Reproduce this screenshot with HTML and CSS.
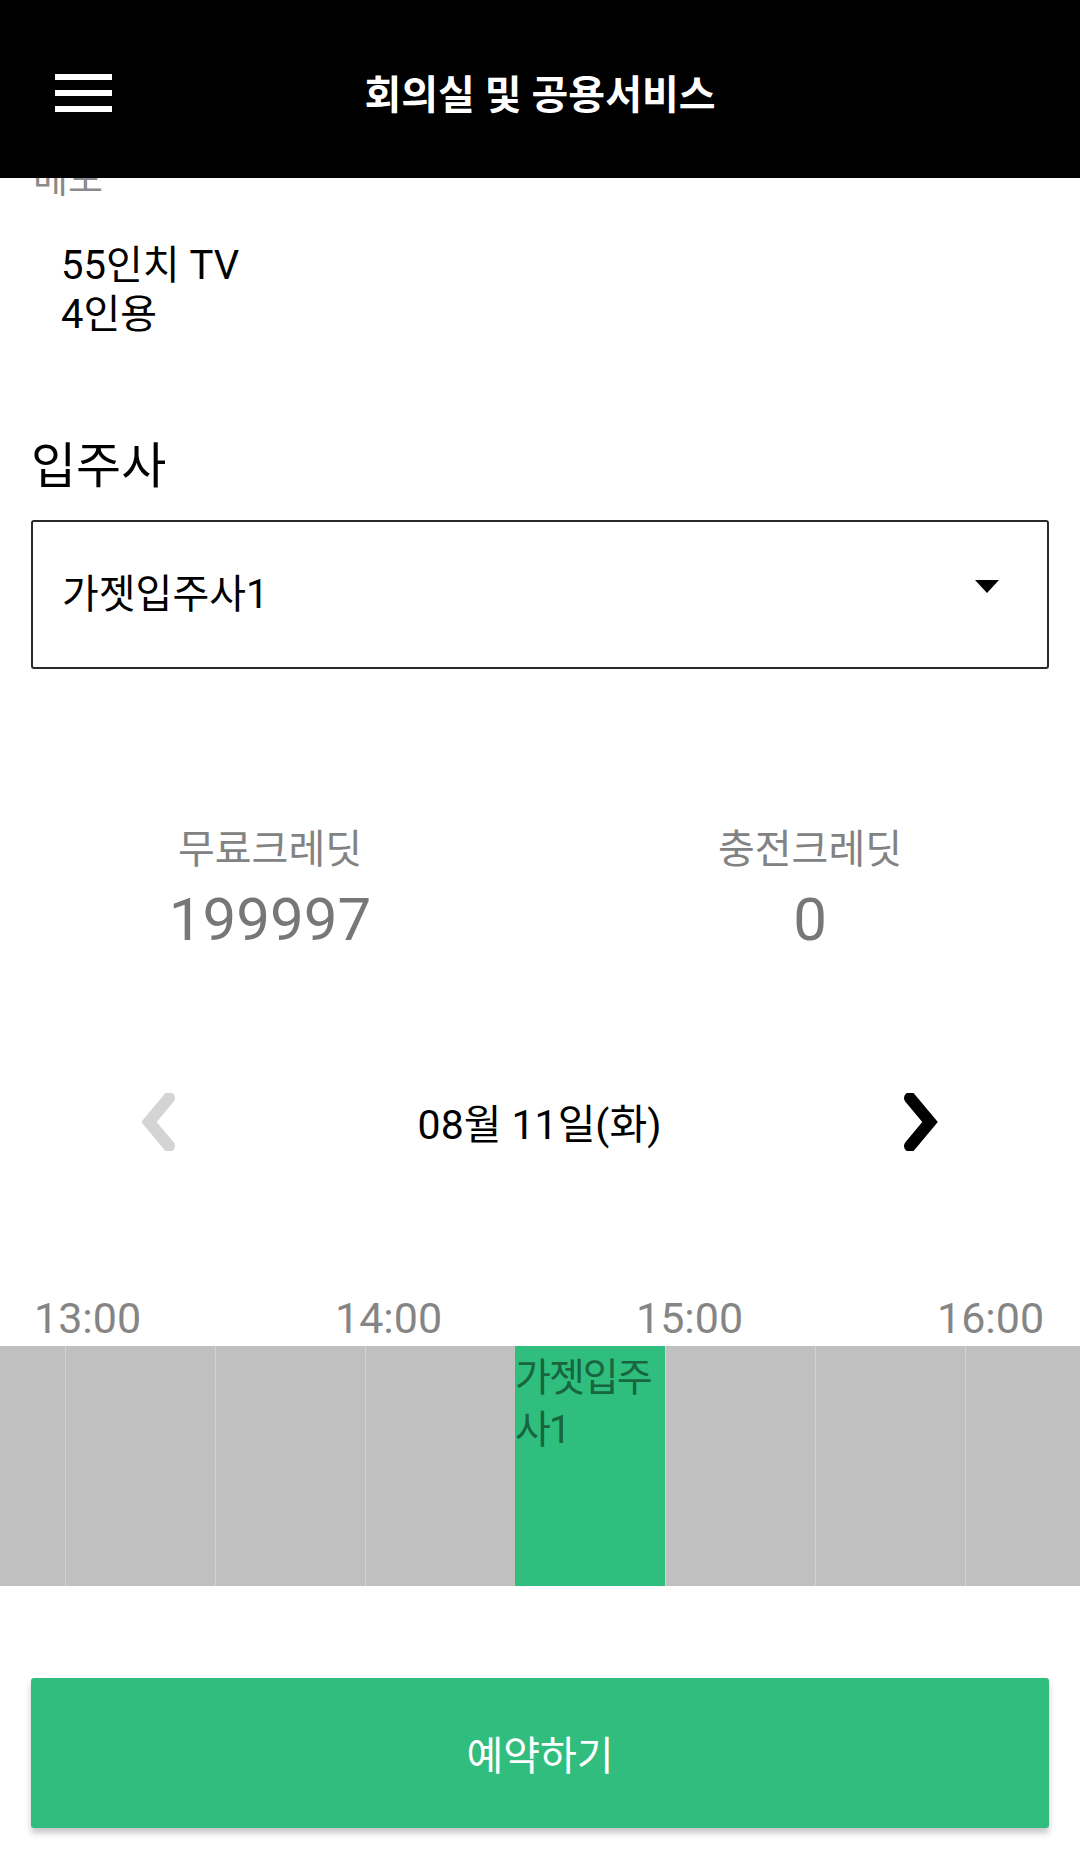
FILE: index.html
```html
<!DOCTYPE html>
<html lang="ko">
<head>
    <meta charset="UTF-8">
    <meta name="viewport" content="width=device-width, initial-scale=1.0">
    <title>회의실 및 공용서비스</title>
    <link rel="stylesheet" href="styles.css">
</head>
<body>
    <header class="topbar">
        <div class="menu-btn">
            <span></span>
            <span></span>
            <span></span>
        </div>
        <h1 class="topbar-title">회의실 및 공용서비스</h1>
    </header>

    <main class="content">
        <div class="memo-label">메모</div>
        <div class="memo-text">55인치 TV<br>4인용</div>

        <h2 class="section-title">입주사</h2>
        <div class="select-box">
            <span class="select-value">가젯입주사1</span>
            <span class="select-arrow"></span>
        </div>

        <div class="credits">
            <div class="credit">
                <div class="credit-label">무료크레딧</div>
                <div class="credit-value">199997</div>
            </div>
            <div class="credit">
                <div class="credit-label">충전크레딧</div>
                <div class="credit-value">0</div>
            </div>
        </div>

        <div class="date-nav">
            <svg class="chevron prev" viewBox="0 0 36 58" width="36" height="58">
                <path d="M29 5 L9 29 L29 53"/>
            </svg>
            <div class="date-text">08월 11일(화)</div>
            <svg class="chevron next" viewBox="0 0 36 58" width="36" height="58">
                <path d="M7 5 L27 29 L7 53"/>
            </svg>
        </div>

        <div class="time-labels">
            <span>13:00</span>
            <span>14:00</span>
            <span>15:00</span>
            <span>16:00</span>
        </div>
        <div class="timeline">
            <div class="slot edge"></div>
            <div class="slot"></div>
            <div class="slot"></div>
            <div class="slot"></div>
            <div class="slot booked">가젯입주사1</div>
            <div class="slot"></div>
            <div class="slot"></div>
            <div class="slot edge-right"></div>
        </div>

        <button class="reserve-btn">예약하기</button>
    </main>
</body>
</html>
```

FILE: styles.css
```css
body, html {
    margin: 0;
    padding: 0;
    height: 100%;
    background-color: #fff;
    font-family: Roboto, "Noto Sans CJK KR", sans-serif;
    overflow: hidden;
}
.topbar {
    display: grid;
    grid-template-columns: 1fr auto 1fr;
    align-items: start;
    height: 178px;
    background-color: #000;
    color: #fff;
}
.menu-btn {
    display: flex;
    flex-direction: column;
    gap: 10px;
    width: 57px;
    margin: 74px 0 0 55px;
}
.menu-btn span {
    display: block;
    height: 6px;
    background-color: #fff;
}
.topbar-title {
    margin: 72px 0 0;
    font-size: 40px;
    line-height: 48px;
    font-weight: 700;
}
.content {
    overflow: hidden;
    height: 1680px;
}
.memo-label {
    margin-top: -23px;
    padding-left: 33px;
    font-size: 38px;
    line-height: 48px;
    color: #8a8a8a;
}
.memo-text {
    margin-top: 38px;
    padding-left: 61px;
    font-size: 40px;
    line-height: 49px;
    color: #000;
}
.section-title {
    margin: 100px 0 0;
    padding-left: 31px;
    font-size: 49px;
    line-height: 56px;
    font-weight: 400;
    color: #000;
}
.select-box {
    display: flex;
    align-items: center;
    justify-content: space-between;
    box-sizing: border-box;
    height: 149px;
    margin: 25px 31px 0;
    padding: 0 48px 0 29px;
    border: 2px solid #2a2a2a;
    border-radius: 3px;
}
.select-value {
    font-size: 40px;
    line-height: 48px;
    color: #000;
}
.select-arrow {
    width: 0;
    height: 0;
    margin-bottom: 16px;
    border-left: 12px solid transparent;
    border-right: 12px solid transparent;
    border-top: 13px solid #000;
}
.credits {
    display: flex;
    margin-top: 157px;
}
.credit {
    flex: 1;
    text-align: center;
}
.credit-label {
    font-size: 40px;
    line-height: 48px;
    color: #828282;
}
.credit-value {
    margin-top: 11px;
    font-size: 60px;
    line-height: 70px;
    color: #777;
}
.date-nav {
    display: flex;
    align-items: flex-start;
    justify-content: space-between;
    height: 60px;
    margin-top: 137px;
    padding: 0 141px 0 140px;
}
.chevron {
    display: block;
    margin-top: 1px;
}
.chevron path {
    fill: none;
    stroke-width: 12;
    stroke-linejoin: miter;
    stroke-linecap: round;
}
.chevron.prev path {
    stroke: #d4d4d4;
}
.chevron.next path {
    stroke: #000;
}
.date-text {
    margin-top: 8px;
    font-size: 41px;
    line-height: 50px;
    color: #000;
}
.time-labels {
    display: flex;
    margin-top: 141px;
    padding-left: 34px;
    font-size: 43px;
    line-height: 50px;
    color: #858585;
}
.time-labels span {
    flex-shrink: 0;
    width: 301px;
}
.timeline {
    display: flex;
    height: 240px;
    margin-top: 3px;
    background-color: #c0c0c0;
}
.slot {
    box-sizing: border-box;
    width: 150px;
    flex-shrink: 0;
    border-left: 1px solid #d2d2d2;
}
.slot.edge {
    width: 65px;
    border-left: none;
}
.slot.edge-right {
    width: 115px;
}
.slot.booked {
    padding-top: 6px;
    border-left: none;
    background-color: #2fbe7d;
    font-size: 39px;
    line-height: 52px;
    letter-spacing: -2px;
    color: #17663f;
    word-break: break-all;
}
.reserve-btn {
    display: block;
    width: 1018px;
    height: 150px;
    margin: 92px 31px 0;
    border: none;
    border-radius: 3px;
    background-color: #31bd7e;
    box-shadow: 0 5px 6px rgba(0, 0, 0, 0.22);
    font-family: inherit;
    font-size: 40px;
    color: #fff;
}
```
